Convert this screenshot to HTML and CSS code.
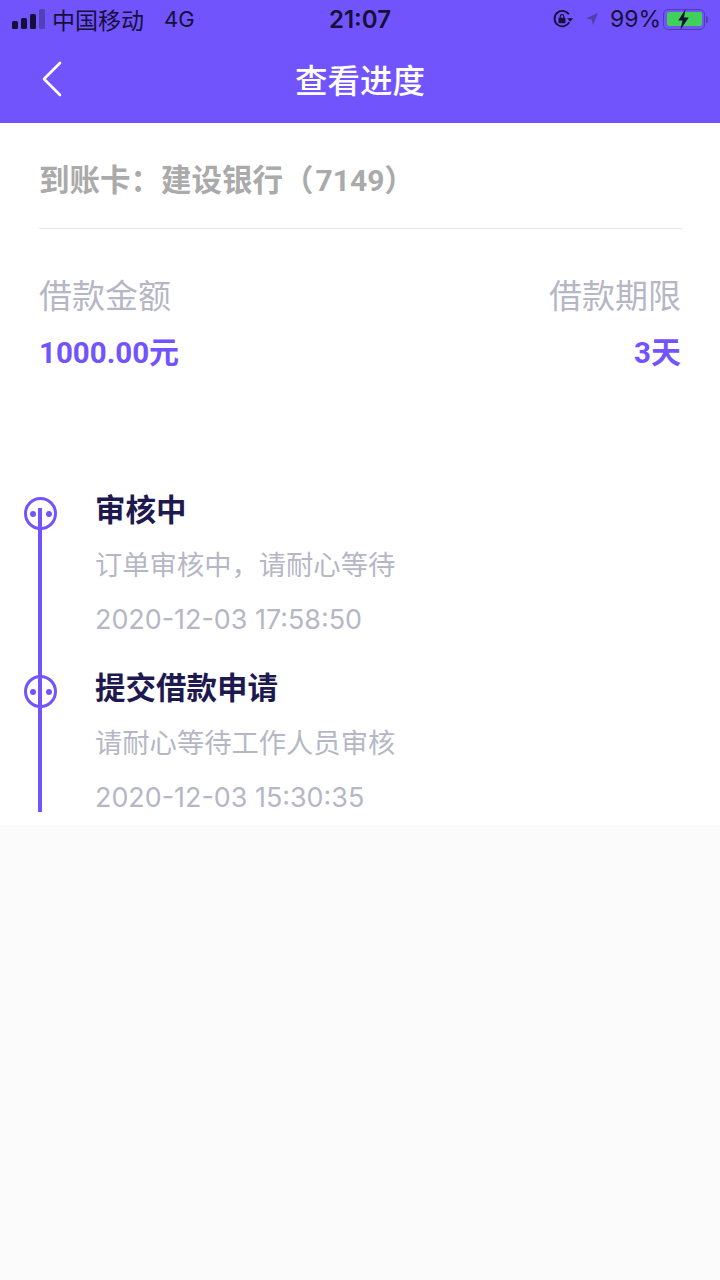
FILE: index.html
```html
<!DOCTYPE html>
<html lang="zh-CN">
<head>
    <meta charset="UTF-8">
    <meta name="viewport" content="width=device-width, initial-scale=1.0">
    <title>查看进度</title>
    <link rel="stylesheet" href="styles.css">
</head>
<body>
    <div class="header">
        <!-- Status bar -->
        <div class="status-bar">
            <div class="status-left">
                <div class="signal">
                    <span class="bar bar-1"></span>
                    <span class="bar bar-2"></span>
                    <span class="bar bar-3"></span>
                    <span class="bar bar-4"></span>
                </div>
                <span class="carrier">中国移动</span>
                <span class="network">4G</span>
            </div>
            <div class="status-time">21:07</div>
            <div class="status-right">
                <svg class="lock-icon" width="22" height="20" viewBox="0 0 22 20">
                    <path d="M17.300 13.200A7.800 7.800 0 1 1 16.800 5.200" fill="none" stroke="#15103a" stroke-width="1.800"/>
                    <path d="M15.200 9.200h6l-3 3.600z" fill="#15103a"/>
                    <rect x="6.500" y="8.800" width="7" height="5.500" rx="1" fill="#15103a"/>
                    <path d="M8.200 9V7.400a1.800 1.800 0 0 1 3.600 0V9" fill="none" stroke="#15103a" stroke-width="1.200"/>
                </svg>
                <svg class="arrow-icon" width="14" height="14" viewBox="0 0 14 14">
                    <path d="M13 1L1 6.600l5.600.8L8 13z" fill="#4d3fae"/>
                </svg>
                <span class="battery-text">99%</span>
                <div class="battery">
                    <div class="battery-body">
                        <div class="battery-fill"></div>
                        <svg class="bolt" width="13" height="21" viewBox="0 0 12 20">
                            <path d="M8 0L1 11h4l-2 9 8-12H6.500z" fill="#15103a"/>
                        </svg>
                    </div>
                    <div class="battery-cap"></div>
                </div>
            </div>
        </div>
        <!-- Nav bar -->
        <div class="nav-bar">
            <svg class="back-icon" width="24" height="38" viewBox="0 0 24 38">
                <path d="M20 3L4 19l16 16" fill="none" stroke="#fff" stroke-width="2.600" stroke-linecap="round" stroke-linejoin="round"/>
            </svg>
            <h1 class="nav-title">查看进度</h1>
        </div>
    </div>

    <div class="content">
        <div class="card-row">到账卡：建设银行（<span class="num card-num">7149</span>）</div>

        <div class="loan-info">
            <div class="loan-col">
                <div class="loan-label">借款金额</div>
                <div class="loan-value"><span class="num">1000.00</span>元</div>
            </div>
            <div class="loan-col loan-col-right">
                <div class="loan-label">借款期限</div>
                <div class="loan-value"><span class="num">3</span>天</div>
            </div>
        </div>

        <div class="timeline">
            <div class="timeline-item">
                <div class="dot"><span class="eye"></span><span class="eye"></span></div>
                <div class="item-title">审核中</div>
                <div class="item-desc">订单审核中，请耐心等待</div>
                <div class="item-time">2020-12-03 17:58:50</div>
            </div>
            <div class="timeline-item">
                <div class="dot"><span class="eye"></span><span class="eye"></span></div>
                <div class="item-title">提交借款申请</div>
                <div class="item-desc">请耐心等待工作人员审核</div>
                <div class="item-time">2020-12-03 15:30:35</div>
            </div>
        </div>
    </div>
</body>
</html>
```

FILE: styles.css
```css
* {
    box-sizing: border-box;
}

body {
    margin: 0;
    min-height: 1280px;
    background-color: #fbfbfb;
    font-family: "Inter", "Noto Sans CJK SC", sans-serif;
    color: #15103a;
}

.header {
    height: 123px;
    background-color: #7254fd;
}

.status-bar {
    display: flex;
    align-items: center;
    justify-content: space-between;
    height: 40px;
    padding: 0 12px 2px;
    position: relative;
    font-family: "Inter", "Noto Sans CJK SC", sans-serif;
    font-size: 23px;
}

.status-left,
.status-right {
    display: flex;
    align-items: center;
}

.signal {
    display: flex;
    align-items: flex-end;
    gap: 3px;
    height: 20px;
    margin-right: 7px;
}

.bar {
    width: 6px;
    border-radius: 1.500px;
    background-color: #15103a;
}

.bar-1 { height: 8px; }
.bar-2 { height: 11px; }
.bar-3 { height: 15px; }
.bar-4 { height: 20px; background-color: #5141b8; }

.network {
    margin-left: 20px;
    font-size: 22px;
}

.status-time {
    position: absolute;
    left: 0;
    right: 0;
    text-align: center;
    font-size: 24px;
    font-weight: 600;
    pointer-events: none;
}

.lock-icon {
    margin-right: 11px;
}

.arrow-icon {
    margin-right: 11px;
}

.battery-text {
    margin-right: 2px;
}

.battery {
    display: flex;
    align-items: center;
}

.battery-body {
    width: 42px;
    height: 21px;
    padding: 2.500px;
    border: 1.500px solid #4d3fae;
    border-radius: 5px;
    position: relative;
}

.battery-fill {
    height: 100%;
    border-radius: 2px;
    background-color: #3fd158;
}

.bolt {
    position: absolute;
    left: 13px;
    top: -1px;
}

.battery-cap {
    width: 2px;
    height: 7px;
    margin-left: 1px;
    border-radius: 0 2px 2px 0;
    background-color: #4d3fae;
}

.nav-bar {
    height: 83px;
    position: relative;
    display: flex;
    align-items: center;
    justify-content: center;
    padding-bottom: 6px;
}

.back-icon {
    position: absolute;
    left: 40px;
    top: 20px;
}

.nav-title {
    margin: 0;
    color: #fff;
    font-size: 32.500px;
    font-weight: 500;
    font-family: "Noto Sans CJK SC", sans-serif;
}

.content {
    height: 702px;
    padding: 0 38px 0 39px;
    background-color: #fff;
}

.card-row {
    height: 106px;
    padding-top: 36px;
    border-bottom: 1px solid #e6e6e9;
    color: #aaaaaa;
    font-size: 30.500px;
    font-weight: 700;
    line-height: 42px;
}

.loan-info {
    display: flex;
    justify-content: space-between;
    padding-top: 44px;
    padding-right: 1px;
}

.loan-col-right {
    text-align: right;
}

.loan-label {
    color: #b5b7c5;
    font-size: 33px;
    line-height: 46px;
}

.loan-value {
    margin-top: 12px;
    color: #7254fd;
    font-size: 30px;
    font-weight: 700;
    line-height: 42px;
}

.num {
    font-family: "Roboto", sans-serif;
    font-size: 29.500px;
}

.card-num {
    margin-left: 2px;
    font-size: 30px;
}

.timeline {
    margin-top: 114px;
    margin-left: -16px;
}

.timeline-item {
    position: relative;
    height: 178px;
    padding-top: 1px;
    padding-left: 72px;
}

/* vertical line runs through both items */
.timeline-item::before {
    content: '';
    position: absolute;
    left: 15px;
    top: 20px;
    width: 4px;
    height: 158px;
    background-color: #7254fd;
}

.timeline-item:last-child::before {
    top: 0;
    height: 146px;
}

.dot {
    position: absolute;
    left: 1px;
    top: 9px;
    display: flex;
    align-items: center;
    justify-content: space-between;
    width: 33px;
    height: 33px;
    padding: 0 2.500px;
    border: 3px solid #7254fd;
    border-radius: 50%;
}

.eye {
    width: 6px;
    height: 6px;
    border-radius: 50%;
    background-color: #7254fd;
}

.item-title {
    color: #1e1a4f;
    font-size: 30.500px;
    font-weight: 700;
    line-height: 42px;
}

.item-desc {
    margin-top: 15px;
    color: #b5b7c5;
    font-size: 27.300px;
    line-height: 40px;
}

.item-time {
    margin-top: 13px;
    color: #b5b7c5;
    font-size: 26.900px;
    line-height: 40px;
}
```
